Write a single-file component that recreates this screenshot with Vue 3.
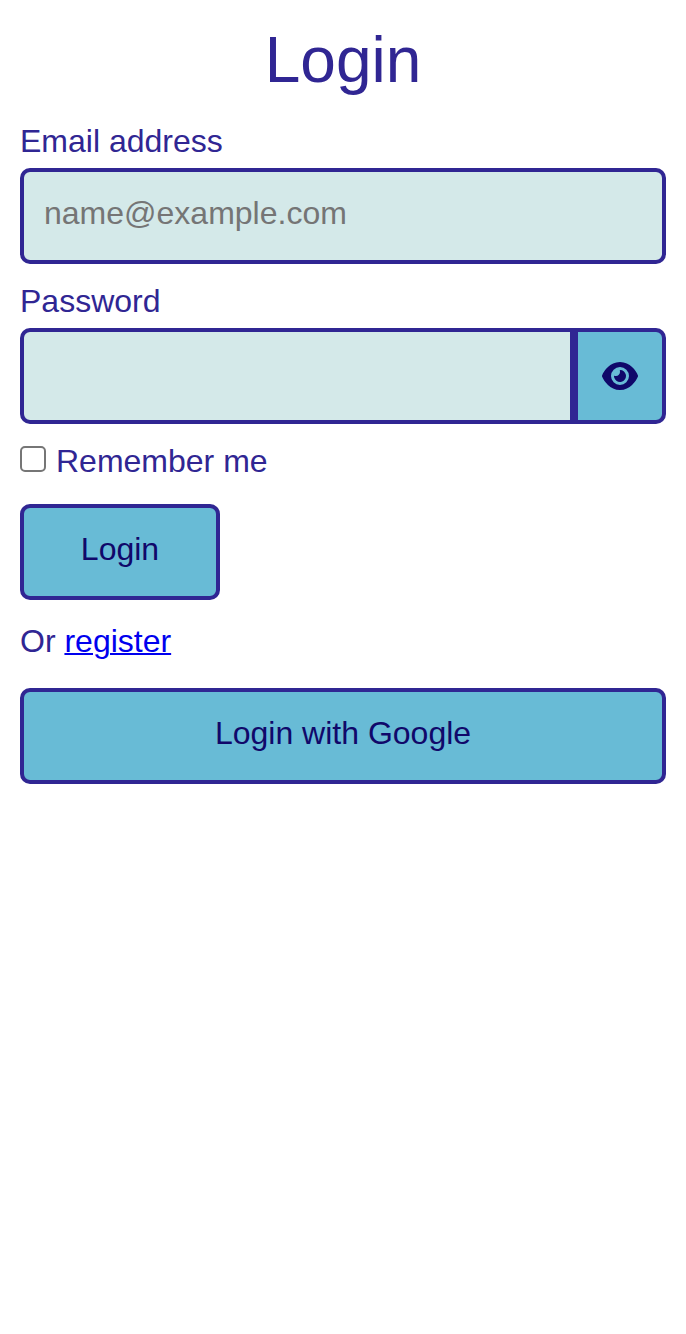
<script setup>
import { ref } from 'vue'
const email = ref('')
const password = ref('')
const remember = ref(false)
const visible = ref(false)
</script>

<template>
  <main class="page">
    <h1>Login</h1>
    <form @submit.prevent>
      <label class="caption" for="email">Email address</label>
      <input id="email" v-model="email" class="field" type="email" placeholder="name@example.com" />
      <label class="caption second" for="password">Password</label>
      <div class="group">
        <input id="password" v-model="password" class="field" :type="visible ? 'text' : 'password'" />
        <button class="toggle" type="button" aria-label="Show password" @click="visible = !visible">
          <svg viewBox="0 0 576 512" width="36" height="32" fill="currentColor">
            <path d="M288 32c-80.8 0-145.5 36.8-192.6 80.6C48.6 156 17.3 208 2.5 243.7c-3.3 7.9-3.3 16.7 0 24.6C17.3 304 48.6 356 95.4 399.4C142.5 443.2 207.2 480 288 480s145.5-36.8 192.6-80.6c46.8-43.5 78.1-95.4 93-131.1c3.3-7.9 3.3-16.7 0-24.6c-14.9-35.7-46.2-87.7-93-131.1C433.5 68.8 368.8 32 288 32zM144 256a144 144 0 1 1 288 0 144 144 0 1 1 -288 0zm144-64c0 35.3-28.7 64-64 64c-7.1 0-13.9-1.2-20.3-3.3c-5.5-1.8-11.9 1.6-11.7 7.4c.3 6.9 1.3 13.8 3.2 20.7c13.7 51.2 66.4 81.6 117.6 67.9s81.6-66.4 67.9-117.6c-11.1-41.5-47.8-69.4-88.6-71.1c-5.8-.2-9.2 6.1-7.4 11.7c2.1 6.4 3.3 13.2 3.3 20.3z" />
          </svg>
        </button>
      </div>
      <label class="remember">
        <input v-model="remember" type="checkbox" />
        <span>Remember me</span>
      </label>
      <button class="button submit" type="submit">Login</button>
    </form>
    <p>Or <a href="#register">register</a></p>
    <button class="button" type="button">Login with Google</button>
  </main>
</template>

<style>
body {
  background: #fff;
}
</style>

<style scoped>
.page {
  padding: 20px;
  color: #302693;
  font: 32px/40px "Liberation Sans", Arial, sans-serif;
}
h1 {
  margin: 0 0 21px;
  font-size: 64px;
  font-weight: 400;
  line-height: 80px;
  text-align: center;
}
.caption {
  display: block;
  margin-bottom: 7px;
}
.second {
  margin-top: 17px;
}
.field {
  display: block;
  box-sizing: border-box;
  width: 100%;
  height: 96px;
  margin: 0;
  padding: 0 20px 6px;
  border: 4px solid #302693;
  border-radius: 10px;
  background: #d4e9e9;
  color: #10086a;
  font: inherit;
  outline: none;
}
.field::placeholder {
  color: #757575;
}
.group {
  display: flex;
}
.group .field {
  flex: 1;
  min-width: 0;
  border-radius: 10px 0 0 10px;
}
.toggle {
  display: flex;
  align-items: center;
  justify-content: center;
  box-sizing: border-box;
  width: 92px;
  height: 96px;
  padding: 0;
  border: 4px solid #302693;
  border-radius: 0 10px 10px 0;
  background: #68bbd6;
  color: #10086a;
}
.remember {
  display: flex;
  align-items: center;
  gap: 10px;
  margin: 17px 0 23px;
}
.remember input {
  appearance: none;
  box-sizing: border-box;
  width: 26px;
  height: 26px;
  margin: 0 0 4px;
  border: 2px solid #767676;
  border-radius: 5px;
  background: #fff;
}
.remember input:checked {
  background: #302693;
}
.button {
  display: block;
  box-sizing: border-box;
  width: 100%;
  height: 96px;
  padding: 0 0 6px;
  border: 4px solid #302693;
  border-radius: 10px;
  background: #68bbd6;
  color: #10086a;
  font: inherit;
}
.submit {
  width: 200px;
}
p {
  margin: 21px 0 27px;
}
a {
  color: #0000ee;
  text-decoration-thickness: 2px;
}
</style>
